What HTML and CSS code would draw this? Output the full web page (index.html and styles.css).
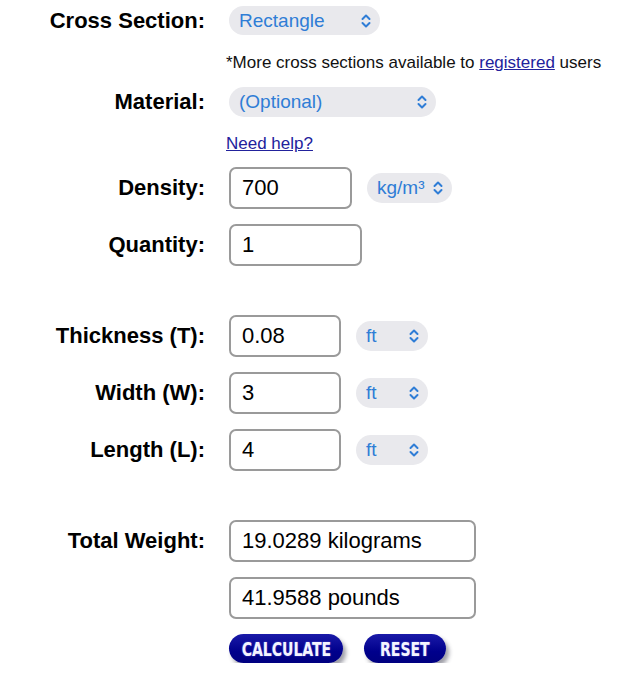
FILE: index.html
```html
<!DOCTYPE html>
<html lang="en">
<head>
    <meta charset="UTF-8">
    <meta name="viewport" content="width=device-width, initial-scale=1.0">
    <title>Weight Calculator</title>
    <link rel="stylesheet" href="styles.css">
</head>
<body>
    <form id="calc" onsubmit="return false">
        <div class="row r-shape">
            <label class="lbl">Cross Section:</label>
            <div class="pick w-shape"><span>Rectangle</span><svg class="chev" viewBox="0 0 10 14"><path d="M1.5 5 L5 1.5 L8.5 5 M1.5 9 L5 12.5 L8.5 9"/></svg></div>
        </div>
        <div class="sub note">*More cross sections available to <a href="#">registered</a> users</div>
        <div class="row r-mat">
            <label class="lbl">Material:</label>
            <div class="pick w-mat"><span>(Optional)</span><svg class="chev" viewBox="0 0 10 14"><path d="M1.5 5 L5 1.5 L8.5 5 M1.5 9 L5 12.5 L8.5 9"/></svg></div>
        </div>
        <div class="sub help"><a href="#">Need help?</a></div>
        <div class="row r-dens">
            <label class="lbl">Density:</label>
            <input type="text" class="box w-dens" value="700">
            <div class="pick unit w-kg"><span>kg/m³</span><svg class="chev" viewBox="0 0 10 14"><path d="M1.5 5 L5 1.5 L8.5 5 M1.5 9 L5 12.5 L8.5 9"/></svg></div>
        </div>
        <div class="row r-near">
            <label class="lbl">Quantity:</label>
            <input type="text" class="box w-qty" value="1">
        </div>

        <div class="row r-far">
            <label class="lbl">Thickness (T):</label>
            <input type="text" class="box w-dim" value="0.08">
            <div class="pick unit w-ft"><span>ft</span><svg class="chev" viewBox="0 0 10 14"><path d="M1.5 5 L5 1.5 L8.5 5 M1.5 9 L5 12.5 L8.5 9"/></svg></div>
        </div>
        <div class="row r-near">
            <label class="lbl">Width (W):</label>
            <input type="text" class="box w-dim" value="3">
            <div class="pick unit w-ft"><span>ft</span><svg class="chev" viewBox="0 0 10 14"><path d="M1.5 5 L5 1.5 L8.5 5 M1.5 9 L5 12.5 L8.5 9"/></svg></div>
        </div>
        <div class="row r-near">
            <label class="lbl">Length (L):</label>
            <input type="text" class="box w-dim" value="4">
            <div class="pick unit w-ft"><span>ft</span><svg class="chev" viewBox="0 0 10 14"><path d="M1.5 5 L5 1.5 L8.5 5 M1.5 9 L5 12.5 L8.5 9"/></svg></div>
        </div>

        <div class="row r-far">
            <label class="lbl">Total Weight:</label>
            <input type="text" class="box w-tot" value="19.0289 kilograms" readonly>
        </div>
        <div class="row r-near">
            <label class="lbl"></label>
            <input type="text" class="box w-tot" value="41.9588 pounds" readonly>
        </div>
        <div class="row r-near">
            <label class="lbl"></label>
            <button class="btn b-calc"><span>CALCULATE</span></button>
            <button class="btn b-reset" type="reset"><span>RESET</span></button>
        </div>
    </form>
</body>
</html>
```

FILE: styles.css
```css
body{
    margin: 0;
    font-family: "Liberation Sans", Arial, sans-serif;
    color: #000;
    background: #fff;
}
#calc{
    padding-top: 6px;
}
.row{
    display: flex;
    align-items: center;
}
.lbl{
    width: 205px;
    margin-right: 24px;
    text-align: right;
    font-weight: bold;
    font-size: 22px;
    flex-shrink: 0;
}
.sub{
    margin-left: 226px;
}
a{
    color: #22229c;
}

/* vertical rhythm */
.note{
    margin-top: 18px;
    font-size: 17px;
    line-height: 20px;
    color: #111;
}
.r-mat{
    margin-top: 14px;
}
.help{
    margin-top: 18px;
    font-size: 17px;
    line-height: 18px;
}
.r-dens{
    margin-top: 14px;
}
.r-near{
    margin-top: 15px;
}
.r-far{
    margin-top: 49px;
}

/* select pills */
.pick{
    display: flex;
    align-items: center;
    justify-content: space-between;
    box-sizing: border-box;
    height: 29px;
    padding: 0 9px 0 10px;
    border-radius: 15px;
    background: #e9e9ed;
    color: #2f7dd6;
    font-size: 19px;
}
.chev{
    width: 10px;
    height: 14px;
    fill: none;
    stroke: #2f7dd6;
    stroke-width: 2;
    stroke-linecap: round;
    stroke-linejoin: round;
}
.w-shape{ width: 151px; }
.w-mat{ width: 207px; height: 30px; }
.unit{
    margin-left: 15px;
    height: 30px;
}
.w-kg{ width: 85px; }
.w-ft{ width: 72px; }

/* text boxes */
.box{
    box-sizing: border-box;
    height: 42px;
    padding: 0 11px;
    border: 2px solid #9a9a9a;
    border-radius: 7px;
    font-family: "Liberation Sans", Arial, sans-serif;
    font-size: 22px;
    color: #000;
    background: #fff;
}
.w-dens{ width: 123px; }
.w-qty{ width: 133px; }
.w-dim{ width: 112px; }
.w-tot{ width: 247px; }

/* buttons */
.btn{
    height: 29px;
    padding: 0;
    border: none;
    border-radius: 15px;
    background: linear-gradient(#1a1aa8, #00008c 60%, #000080);
    box-shadow: 3px 4px 4px rgba(40,40,60,0.45);
    color: #f4f4ff;
    font-family: "DejaVu Sans Condensed", "DejaVu Sans", sans-serif;
    font-weight: bold;
    font-size: 20px;
    text-shadow: 0 0 2px rgba(160,160,255,0.6);
}
.btn span{
    display: inline-block;
    transform: scaleX(0.78);
}
.b-calc{ width: 114px; }
.b-reset{
    width: 82px;
    margin-left: 21px;
}
```
